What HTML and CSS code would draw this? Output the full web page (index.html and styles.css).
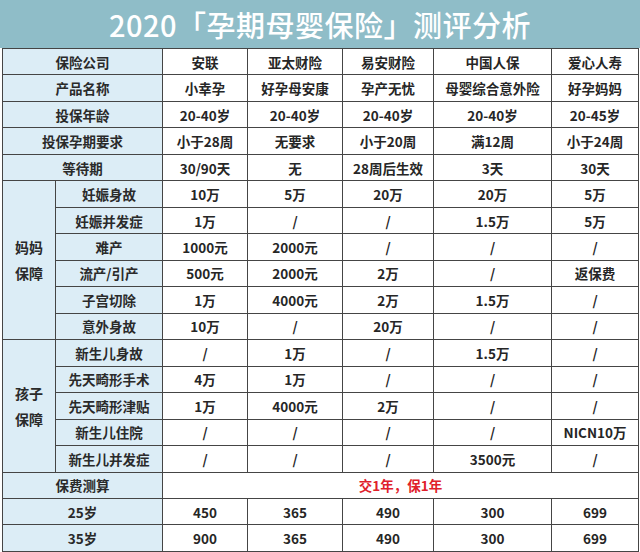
FILE: index.html
```html
<!DOCTYPE html>
<html lang="zh">
<head>
<meta charset="utf-8">
<link rel="stylesheet" href="styles.css">
</head>
<body>
<div class="page">
  <div class="title">2020「孕期母婴保险」测评分析</div>
  <table class="grid">
    <colgroup>
      <col class="c-grp"><col class="c-sub"><col class="c1"><col class="c2"><col class="c3"><col class="c4"><col class="c5">
    </colgroup>
    <tbody>
      <tr><th colspan="2">保险公司</th><td>安联</td><td>亚太财险</td><td>易安财险</td><td>中国人保</td><td>爱心人寿</td></tr>
      <tr><th colspan="2">产品名称</th><td>小幸孕</td><td>好孕母安康</td><td>孕产无忧</td><td>母婴综合意外险</td><td>好孕妈妈</td></tr>
      <tr><th colspan="2">投保年龄</th><td>20-40岁</td><td>20-40岁</td><td>20-40岁</td><td>20-40岁</td><td>20-45岁</td></tr>
      <tr><th colspan="2">投保孕期要求</th><td>小于28周</td><td>无要求</td><td>小于20周</td><td>满12周</td><td>小于24周</td></tr>
      <tr><th colspan="2">等待期</th><td>30/90天</td><td>无</td><td>28周后生效</td><td>3天</td><td>30天</td></tr>
      <tr><th rowspan="6" class="grp">妈妈<br>保障</th><th>妊娠身故</th><td>10万</td><td>5万</td><td>20万</td><td>20万</td><td>5万</td></tr>
      <tr><th>妊娠并发症</th><td>1万</td><td>/</td><td>/</td><td>1.5万</td><td>5万</td></tr>
      <tr><th>难产</th><td>1000元</td><td>2000元</td><td>/</td><td>/</td><td>/</td></tr>
      <tr><th>流产/引产</th><td>500元</td><td>2000元</td><td>2万</td><td>/</td><td>返保费</td></tr>
      <tr><th>子宫切除</th><td>1万</td><td>4000元</td><td>2万</td><td>1.5万</td><td>/</td></tr>
      <tr><th>意外身故</th><td>10万</td><td>/</td><td>20万</td><td>/</td><td>/</td></tr>
      <tr><th rowspan="5" class="grp">孩子<br>保障</th><th>新生儿身故</th><td>/</td><td>1万</td><td>/</td><td>1.5万</td><td>/</td></tr>
      <tr><th>先天畸形手术</th><td>4万</td><td>1万</td><td>/</td><td>/</td><td>/</td></tr>
      <tr><th>先天畸形津贴</th><td>1万</td><td>4000元</td><td>2万</td><td>/</td><td>/</td></tr>
      <tr><th>新生儿住院</th><td>/</td><td>/</td><td>/</td><td>/</td><td>NICN10万</td></tr>
      <tr><th>新生儿并发症</th><td>/</td><td>/</td><td>/</td><td>3500元</td><td>/</td></tr>
      <tr><th colspan="2">保费测算</th><td colspan="5" class="note">交1年，保1年</td></tr>
      <tr><th colspan="2">25岁</th><td>450</td><td>365</td><td>490</td><td>300</td><td>699</td></tr>
      <tr><th colspan="2">35岁</th><td>900</td><td>365</td><td>490</td><td>300</td><td>699</td></tr>
    </tbody>
  </table>
</div>
</body>
</html>
```
FILE: styles.css
```css
html, body {
  margin: 0;
  padding: 0;
  background: #ffffff;
}
.page {
  width: 640px;
  height: 552px;
  overflow: hidden;
  font-family: "Noto Sans CJK SC", "Noto Sans", sans-serif;
  color: #262626;
}
.title {
  height: 48px;
  background: #8fbdc8;
  color: #ffffff;
  font-size: 29px;
  font-weight: 500;
  line-height: 48px;
  text-align: center;
  letter-spacing: 0.5px;
}
.grid {
  margin-left: 2px;
  width: 636px;
  height: 504px;
  table-layout: fixed;
  border-collapse: collapse;
}
.c-grp { width: 53px; }
.c-sub { width: 107px; }
.c1 { width: 85px; }
.c2 { width: 95px; }
.c3 { width: 91px; }
.c4 { width: 118px; }
.c5 { width: 87px; }
.grid th, .grid td {
  border: 1px solid #454545;
  padding: 0;
  text-align: center;
  vertical-align: middle;
  font-size: 13.5px;
  font-weight: 700;
  line-height: 18px;
  white-space: nowrap;
}
.grid th {
  background: #dcedf6;
  color: #2a2a2a;
}
.grid td {
  background: #ffffff;
}
.grid th.grp {
  line-height: 26px;
  font-size: 14px;
}
.grid td.note {
  color: #e0202a;
  text-align: center;
}
```
